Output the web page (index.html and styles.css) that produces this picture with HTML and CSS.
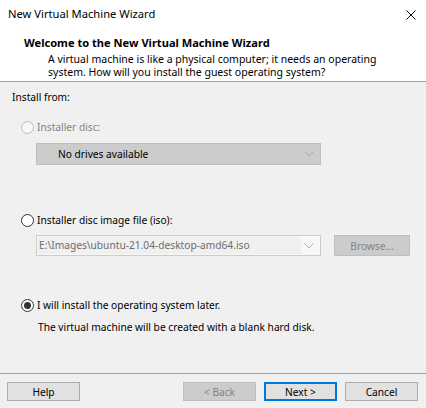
FILE: index.html
```html
<!DOCTYPE html>
<html>
<head>
<meta charset="utf-8">
<link rel="stylesheet" href="styles.css">
</head>
<body>
<div class="dialog">
  <div class="titlebar">
    <span class="title">New Virtual Machine Wizard</span>
    <svg class="close" width="10" height="10" viewBox="0 0 10 10"><path d="M0.5 0.5 L9.5 9.5 M9.5 0.5 L0.5 9.5" stroke="#000" stroke-width="1" fill="none"/></svg>
  </div>
  <div class="header">
    <div class="h-title">Welcome to the New Virtual Machine Wizard</div>
    <div class="h-desc">A virtual machine is like a physical computer; it needs an operating<br>system. How will you install the guest operating system?</div>
  </div>
  <div class="content">
    <div class="label">Install from:</div>
    <div class="radio-row r1 disabled"><span class="radio"></span><span>Installer disc:</span></div>
    <div class="combo c1">
      <span class="combo-text">No drives available</span>
      <svg class="chev" width="10" height="6" viewBox="0 0 10 6"><path d="M0.5 0.5 L5 5 L9.5 0.5" stroke="#a6a6a6" fill="none"/></svg>
    </div>
    <div class="radio-row r2"><span class="radio"></span><span>Installer disc image file (iso):</span></div>
    <div class="iso-row">
      <div class="combo c2">
        <span class="combo-text">E:\Images\ubuntu-21.04-desktop-amd64.iso</span>
        <svg class="chev" width="10" height="6" viewBox="0 0 10 6"><path d="M0.5 0.5 L5 5 L9.5 0.5" stroke="#b0b0b0" fill="none"/></svg>
      </div>
      <div class="btn disabled-btn browse">Browse...</div>
    </div>
    <div class="radio-row r3"><span class="radio checked"></span><span>I will install the operating system later.</span></div>
    <div class="note">The virtual machine will be created with a blank hard disk.</div>
  </div>
  <div class="footer">
    <div class="btn help">Help</div>
    <div class="spacer"></div>
    <div class="btn disabled-btn">&lt; Back</div>
    <div class="btn default">Next &gt;</div>
    <div class="btn">Cancel</div>
  </div>
</div>
</body>
</html>
```
FILE: styles.css
```css
html, body {
  margin: 0;
  padding: 0;
}
body {
  font-family: "Noto Sans", "Open Sans", sans-serif;
  font-size: 10.2px;
  color: #000;
  background: #f0f0f0;
}
.dialog {
  width: 426px;
  height: 408px;
  display: flex;
  flex-direction: column;
  background: #f0f0f0;
}
.titlebar {
  height: 30px;
  background: #fff;
  display: flex;
  align-items: center;
  justify-content: space-between;
  padding: 0 10px 2px 8px;
  box-sizing: border-box;
  font-size: 11.2px;
}
.title {
  line-height: 14px;
}
.close {
  display: block;
  margin-top: 1px;
}
.header {
  height: 52px;
  background: #fff;
  border-bottom: 1px solid #a0a0a0;
  box-sizing: border-box;
  padding: 6px 0 0 24px;
}
.h-title {
  font-weight: bold;
  font-size: 11.1px;
  line-height: 14px;
}
.h-desc {
  margin-top: 3px;
  padding-left: 24px;
  font-size: 10.5px;
  line-height: 13px;
}
.content {
  flex: 1;
  padding: 8px 0 0 12px;
  box-sizing: border-box;
  display: flex;
  flex-direction: column;
  align-items: flex-start;
}
.label {
  line-height: 14px;
}
.radio-row {
  display: flex;
  align-items: center;
  line-height: 14px;
  padding-left: 9px;
  gap: 3px;
}
.radio {
  width: 13px;
  height: 13px;
  box-sizing: border-box;
  border: 1px solid #333;
  border-radius: 50%;
  background: #fff;
  display: flex;
  align-items: center;
  justify-content: center;
}
.radio.checked::after {
  content: "";
  width: 7px;
  height: 7px;
  border-radius: 50%;
  background: #333;
}
.disabled {
  color: #838383;
}
.disabled .radio {
  border-color: #bcbcbc;
  background: #f7f7f7;
}
.r1 { margin-top: 16px; }
.r2 { margin-top: 48px; }
.r3 { margin-top: 42px; }
.combo {
  margin-left: 24px;
  width: 285px;
  box-sizing: border-box;
  display: flex;
  align-items: center;
  justify-content: space-between;
  padding-right: 6px;
}
.c1 {
  margin-top: 9px;
  height: 22px;
  background: #cccccc;
  border: 1px solid #bfbfbf;
  padding-left: 21px;
}
.iso-row {
  margin-top: 8px;
  margin-left: 24px;
  display: flex;
  gap: 13px;
}
.c2 {
  margin-left: 0;
  height: 21px;
  background: #f7f7f7;
  border: 1px solid #cccccc;
  padding-left: 1px;
}
.c2 .combo-text {
  background: #f0f0f0;
  color: #6d6d6d;
  width: 263px;
  height: 17px;
  line-height: 17px;
  padding-left: 1px;
  box-sizing: border-box;
  white-space: nowrap;
}
.chev {
  display: block;
}
.note {
  margin-top: 8px;
  margin-left: 26px;
  line-height: 14px;
}
.btn {
  width: 73px;
  height: 19px;
  box-sizing: border-box;
  background: #e1e1e1;
  border: 1px solid #adadad;
  display: flex;
  align-items: center;
  justify-content: center;
  line-height: 14px;
}
.disabled-btn {
  background: #cccccc;
  border-color: #bfbfbf;
  color: #838383;
}
.browse {
  width: 76px;
  height: 21px;
}
.btn.default {
  border: 2px solid #0078d7;
}
.footer {
  height: 35px;
  border-top: 1px solid #a0a0a0;
  box-sizing: border-box;
  display: flex;
  padding: 8px 8px 0 7px;
  gap: 8px;
  align-items: flex-start;
}
.spacer {
  flex: 1;
}
```
